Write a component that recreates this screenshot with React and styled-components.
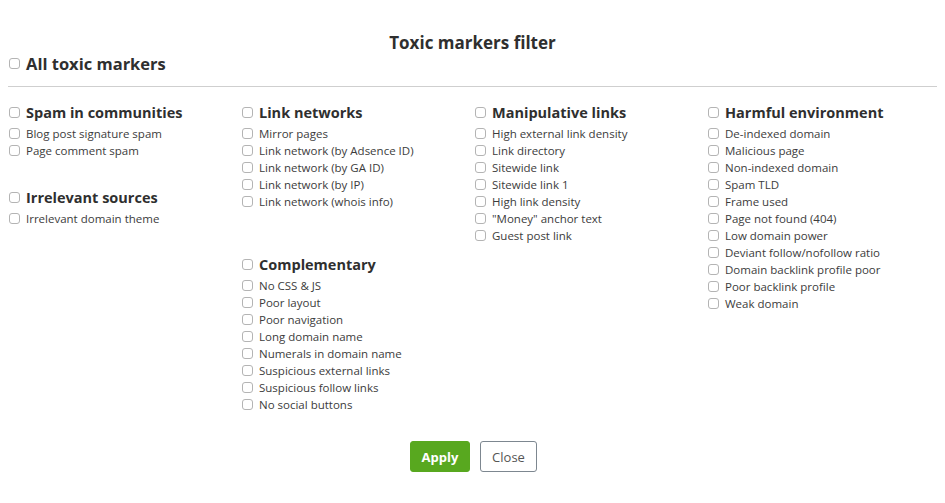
import React from 'react';
import styled, { createGlobalStyle } from 'styled-components';

const GlobalStyle = createGlobalStyle`
  html {
    overflow-x: hidden;
  }
  body {
    margin: 8px;
    background: #ffffff;
    font-family: "Open Sans", "Noto Sans", sans-serif;
    color: #333;
  }
`;

const Modal = styled.div`
  position: relative;
  padding-top: 25px;
`;

const CloseDot = styled.div`
  position: absolute;
  top: 14px;
  left: 931px;
  width: 13px;
  height: 13px;
  border-radius: 50%;
  border: 1px solid #a8a8a8;
`;

const Title = styled.h2`
  margin: 0;
  font-size: 17px;
  line-height: 20px;
  font-weight: 700;
  text-align: center;
  color: #2f2f2f;
`;

const Row = styled.label`
  display: flex;
  align-items: center;
  gap: 6px;
  height: ${p => p.$h}px;
  font-size: ${p => p.$size}px;
  font-weight: ${p => (p.$bold ? 700 : 400)};
  color: ${p => (p.$bold ? '#2f2f2f' : '#3c3c3c')};
  white-space: nowrap;
`;

const Box = styled.span`
  flex: none;
  width: 9px;
  height: 9px;
  margin-left: 1px;
  border: 1px solid #b4b4b4;
  border-radius: 3px;
  background: #fff;
`;

const Rule = styled.hr`
  margin: 13px -3px 14px 0;
  border: 0;
  border-top: 1px solid #cfcfcf;
`;

const Columns = styled.div`
  display: grid;
  grid-template-columns: repeat(4, 233px);
`;

const Column = styled.div`
  display: flex;
  flex-direction: column;
`;

const Group = styled.div`
  display: flex;
  flex-direction: column;
  margin-bottom: ${p => p.$after || 0}px;
`;

const Heading = styled(Row)`
  margin-bottom: 2px;
`;

const Footer = styled.div`
  display: flex;
  justify-content: center;
  gap: 10px;
  margin-top: 28px;
  padding-left: 2px;
`;

const Button = styled.button`
  height: 31px;
  width: ${p => p.$w}px;
  border-radius: 3px;
  font-family: "Open Sans", "Noto Sans", sans-serif;
  font-size: 13px;
  font-weight: ${p => (p.$primary ? 700 : 400)};
  color: ${p => (p.$primary ? '#fff' : '#555')};
  background: ${p => (p.$primary ? '#58a81f' : '#fff')};
  border: 1px solid ${p => (p.$primary ? '#58a81f' : '#7d8790')};
  cursor: pointer;
`;

const columns = [
  [
    { title: 'Spam in communities', after: 27, items: ['Blog post signature spam', 'Page comment spam'] },
    { title: 'Irrelevant sources', items: ['Irrelevant domain theme'] },
  ],
  [
    {
      title: 'Link networks',
      after: 43,
      items: [
        'Mirror pages',
        'Link network (by Adsence ID)',
        'Link network (by GA ID)',
        'Link network (by IP)',
        'Link network (whois info)',
      ],
    },
    {
      title: 'Complementary',
      items: [
        'No CSS & JS',
        'Poor layout',
        'Poor navigation',
        'Long domain name',
        'Numerals in domain name',
        'Suspicious external links',
        'Suspicious follow links',
        'No social buttons',
      ],
    },
  ],
  [
    {
      title: 'Manipulative links',
      items: [
        'High external link density',
        'Link directory',
        'Sitewide link',
        'Sitewide link 1',
        'High link density',
        '"Money" anchor text',
        'Guest post link',
      ],
    },
  ],
  [
    {
      title: 'Harmful environment',
      items: [
        'De-indexed domain',
        'Malicious page',
        'Non-indexed domain',
        'Spam TLD',
        'Frame used',
        'Page not found (404)',
        'Low domain power',
        'Deviant follow/nofollow ratio',
        'Domain backlink profile poor',
        'Poor backlink profile',
        'Weak domain',
      ],
    },
  ],
];

export default function App() {
  return (
    <>
      <GlobalStyle />
      <Modal>
        <CloseDot />
        <Title>Toxic markers filter</Title>
        <Row $h={20} $size={16.5} $bold>
          <Box />
          All toxic markers
        </Row>
        <Rule />
        <Columns>
          {columns.map((groups, ci) => (
            <Column key={ci}>
              {groups.map(g => (
                <Group key={g.title} $after={g.after}>
                  <Heading $h={22} $size={14.5} $bold>
                    <Box />
                    {g.title}
                  </Heading>
                  {g.items.map(item => (
                    <Row key={item} $h={17} $size={11.5}>
                      <Box />
                      {item}
                    </Row>
                  ))}
                </Group>
              ))}
            </Column>
          ))}
        </Columns>
        <Footer>
          <Button $primary $w={60}>Apply</Button>
          <Button $w={57}>Close</Button>
        </Footer>
      </Modal>
    </>
  );
}
